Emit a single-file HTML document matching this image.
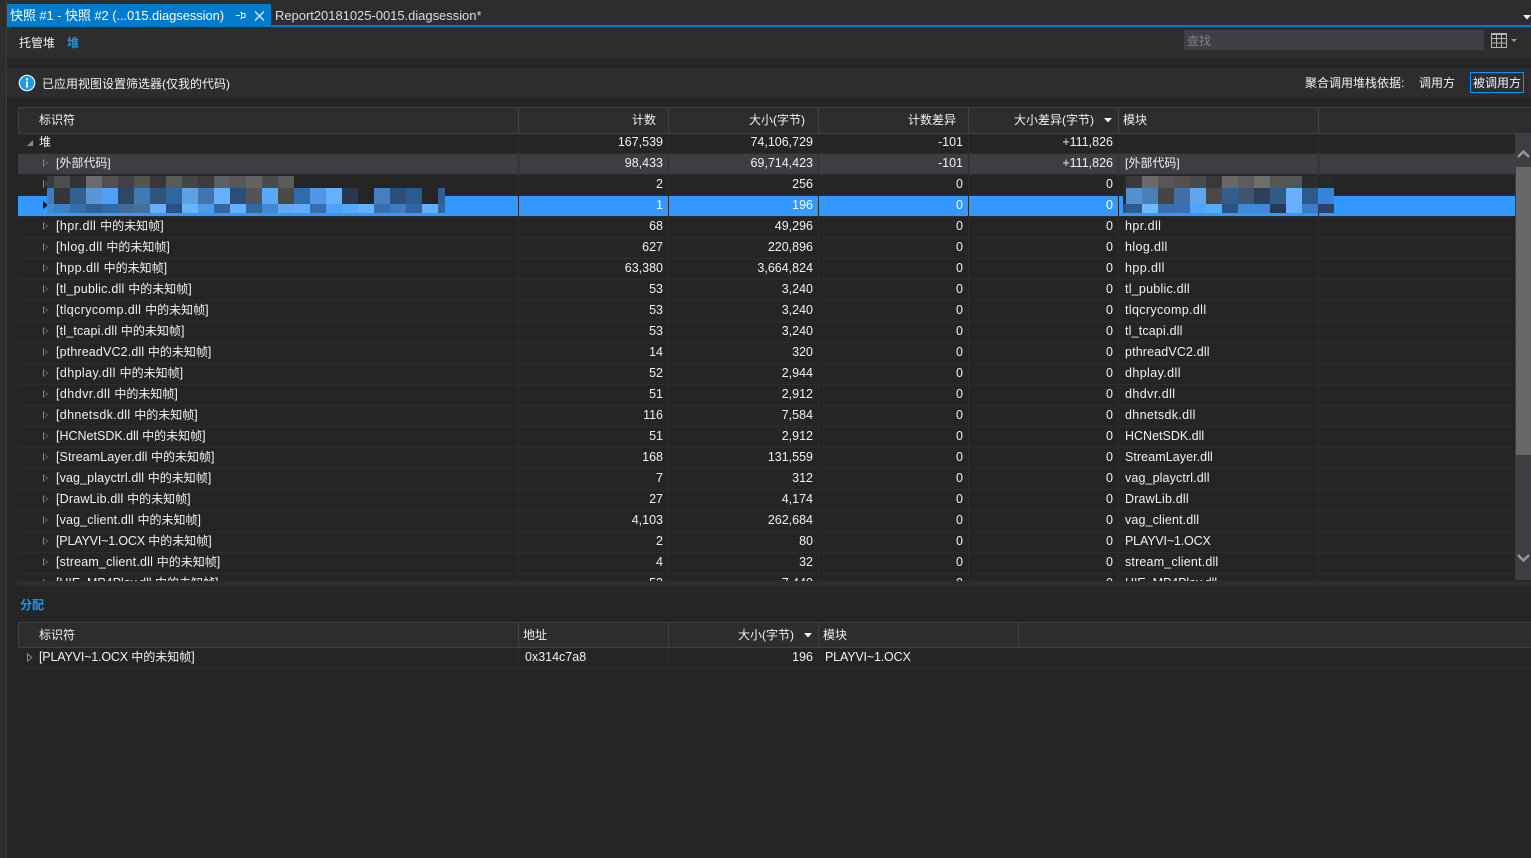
<!DOCTYPE html>
<html><head><meta charset="utf-8"><style>
*{box-sizing:border-box}
html,body{margin:0;padding:0;width:1531px;height:858px;overflow:hidden;background:#252526;color:#f1f1f1;font:12.5px/17px "Liberation Sans","Noto Sans CJK SC",sans-serif}
.a{position:absolute;white-space:nowrap}
u{text-decoration:none;font-size:12px;letter-spacing:0}
.r{position:absolute;left:18px;width:1497px;height:21px;border-bottom:1px solid #2d2d30;display:flex}
.r span{display:block;height:100%;border-right:1px solid #2d2d30;white-space:nowrap;padding-top:1px;overflow:visible;position:relative}
.r span:nth-child(1){width:501px;padding-left:38px}
.r span:nth-child(2){width:150px;text-align:right;padding-right:5px}
.r span:nth-child(3){width:150px;text-align:right;padding-right:5px}
.r span:nth-child(4){width:150px;text-align:right;padding-right:5px}
.r span:nth-child(5){width:150px;text-align:right;padding-right:5px}
.r span:nth-child(6){width:200px;padding-left:6px}
.g{background:#3e3e42;border-bottom-color:#2d2d30}
.s{background:#3399ff;color:#fff;border-bottom-color:#2d2d30}
.s span{border-right-color:#252526}
.t::before,.t::after{content:"";position:absolute;left:25px;top:5px;width:0;height:0;border-style:solid;border-width:4px 0 4px 5px;border-color:transparent transparent transparent #8a8a8a}
.t::after{left:26px;top:6px;border-width:3px 0 3px 3px;border-left-color:#252526}
.g .t::after{border-left-color:#3e3e42}
.s .t::before{border-left-color:#111}.s .t::after{border-left-color:#111}
</style></head><body>

<div class="a" style="left:0;top:0;width:1531px;height:27px;background:#2d2d30"></div>
<div class="a" style="left:271px;top:25px;width:1260px;height:2px;background:#007acc"></div>
<div class="a" style="left:6px;top:4px;width:265px;height:23px;background:#007acc"></div>
<div class="a" style="left:10px;top:7px;color:#fff;font-size:13px;letter-spacing:-.08px">快照 #1 - 快照 #2 (...015.diagsession)</div>
<svg class="a" style="left:234px;top:9px" width="32" height="14" viewBox="0 0 32 14"><path d="M2 6.5H6M6.5 3.5H7.5V9.5H6.5M7.5 4.5H11V8.5H7.5" fill="none" stroke="#fff" stroke-width="1"/><path d="M21 2.5L30 11.5M30 2.5L21 11.5" stroke="#cfe6f6" stroke-width="1.5"/></svg>
<div class="a" style="left:275px;top:7px;color:#dcdcdc;font-size:13px;letter-spacing:-.03px">Report20181025-0015.diagsession*</div>
<svg class="a" style="left:1523px;top:15px" width="8" height="5"><path d="M0 0H8L4 4.5Z" fill="#f1f1f1"/></svg>

<div class="a" style="left:0;top:0;width:7px;height:858px;background:#2d2d30;border-right:1px solid #3a3a3d;"></div>
<div class="a" style="left:0;top:0;width:6px;height:27px;background:#2d2d30"></div>

<div class="a" style="left:7px;top:27px;width:1524px;height:31px;background:#2d2d30"></div>
<div class="a" style="left:19px;top:35px;font-size:12px">托管堆</div>
<div class="a" style="left:67px;top:35px;font-size:12px;color:#1c97ea;font-weight:bold">堆</div>
<div class="a" style="left:1184px;top:30px;width:300px;height:20px;background:#3f3f46"></div>
<div class="a" style="left:1187px;top:33px;font-size:12px;color:#808080">查找</div>
<svg class="a" style="left:1491px;top:33px" width="26" height="15" viewBox="0 0 26 15"><path d="M.5.5H15.5V14.5H.5ZM.5 5.5H15.5M.5 10H15.5M5.5 .5V14.5M10.5 .5V14.5" fill="none" stroke="#b4b4b4"/><path d="M.5 1H15.5" stroke="#b4b4b4" stroke-width="2"/><path d="M20 6H26L23 9Z" fill="#999"/></svg>

<div class="a" style="left:7px;top:68px;width:1524px;height:29px;background:#2d2d30"></div>
<svg class="a" style="left:18px;top:74px" width="18" height="18" viewBox="0 0 18 18"><circle cx="9" cy="9" r="7.7" fill="#1b9ae6" stroke="#eaf5fc" stroke-width="1.2"/><rect x="8" y="7.5" width="2" height="6" fill="#fff"/><rect x="8" y="4.3" width="2" height="2" fill="#fff"/></svg>
<div class="a" style="left:42px;top:76px;font-size:12px">已应用视图设置筛选器(仅我的代码)</div>
<div class="a" style="left:1305px;top:75px;font-size:12px">聚合调用堆栈依据:</div>
<div class="a" style="left:1419px;top:75px;font-size:12px">调用方</div>
<div class="a" style="left:1470px;top:72px;width:54px;height:21px;border:1px solid #0e97f7"></div>
<div class="a" style="left:1473px;top:75px;font-size:12px">被调用方</div>

<!-- table 1 header -->
<div class="a" style="left:18px;top:107px;width:1513px;height:27px;background:#2d2d30;border:1px solid #3f3f46;border-right:0"></div>
<div class="a" style="left:518px;top:108px;width:1px;height:25px;background:#3f3f46"></div>
<div class="a" style="left:668px;top:108px;width:1px;height:25px;background:#3f3f46"></div>
<div class="a" style="left:818px;top:108px;width:1px;height:25px;background:#3f3f46"></div>
<div class="a" style="left:968px;top:108px;width:1px;height:25px;background:#3f3f46"></div>
<div class="a" style="left:1118px;top:108px;width:1px;height:25px;background:#3f3f46"></div>
<div class="a" style="left:1318px;top:108px;width:1px;height:25px;background:#3f3f46"></div>
<div class="a" style="left:39px;top:112px;font-size:12px">标识符</div>
<div class="a" style="right:875px;top:112px;font-size:12px">计数</div>
<div class="a" style="right:726px;top:112px;font-size:12px">大小(字节)</div>
<div class="a" style="right:575px;top:112px;font-size:12px">计数差异</div>
<div class="a" style="right:437px;top:112px;font-size:12px">大小差异(字节)</div>
<svg class="a" style="left:1104px;top:118px" width="8" height="5"><path d="M0 0H8L4 4.5Z" fill="#f1f1f1"/></svg>
<div class="a" style="left:1123px;top:112px;font-size:12px">模块</div>

<!-- table 1 rows -->
<div class="a" style="left:0;top:134px;width:1531px;height:447px;overflow:hidden">
<div class="r" style="top:-1px"><span style="padding-left:21px"><u>堆</u></span><span>167,539</span><span>74,106,729</span><span>-101</span><span>+111,826</span><span></span></div>
<svg class="a" style="left:26px;top:5px" width="8" height="8"><path d="M7 1V7H1Z" fill="#8a8a8a"/></svg>
<div class="r g" style="top:20px"><span class="t"><u>[外部代码]</u></span><span>98,433</span><span>69,714,423</span><span>-101</span><span>+111,826</span><span><u>[外部代码]</u></span></div>
<div class="r" style="top:41px"><span class="t"></span><span>2</span><span>256</span><span>0</span><span>0</span><span></span></div>
<div class="r s" style="top:62px"><span class="t"></span><span>1</span><span>196</span><span>0</span><span>0</span><span></span></div>
<div class="r" style="top:83px"><span class="t" style="letter-spacing:.43px">[hpr.dll <u>中的未知帧</u>]</span><span>68</span><span>49,296</span><span>0</span><span>0</span><span style="letter-spacing:.43px">hpr.dll</span></div>
<div class="r" style="top:104px"><span class="t" style="letter-spacing:.38px">[hlog.dll <u>中的未知帧</u>]</span><span>627</span><span>220,896</span><span>0</span><span>0</span><span style="letter-spacing:.38px">hlog.dll</span></div>
<div class="r" style="top:125px"><span class="t" style="letter-spacing:.43px">[hpp.dll <u>中的未知帧</u>]</span><span>63,380</span><span>3,664,824</span><span>0</span><span>0</span><span style="letter-spacing:.43px">hpp.dll</span></div>
<div class="r" style="top:146px"><span class="t" style="letter-spacing:.23px">[tl_public.dll <u>中的未知帧</u>]</span><span>53</span><span>3,240</span><span>0</span><span>0</span><span style="letter-spacing:.23px">tl_public.dll</span></div>
<div class="r" style="top:167px"><span class="t" style="letter-spacing:.36px">[tlqcrycomp.dll <u>中的未知帧</u>]</span><span>53</span><span>3,240</span><span>0</span><span>0</span><span style="letter-spacing:.36px">tlqcrycomp.dll</span></div>
<div class="r" style="top:188px"><span class="t" style="letter-spacing:.17px">[tl_tcapi.dll <u>中的未知帧</u>]</span><span>53</span><span>3,240</span><span>0</span><span>0</span><span style="letter-spacing:.17px">tl_tcapi.dll</span></div>
<div class="r" style="top:209px"><span class="t" style="letter-spacing:.14px">[pthreadVC2.dll <u>中的未知帧</u>]</span><span>14</span><span>320</span><span>0</span><span>0</span><span style="letter-spacing:.14px">pthreadVC2.dll</span></div>
<div class="r" style="top:230px"><span class="t" style="letter-spacing:.4px">[dhplay.dll <u>中的未知帧</u>]</span><span>52</span><span>2,944</span><span>0</span><span>0</span><span style="letter-spacing:.4px">dhplay.dll</span></div>
<div class="r" style="top:251px"><span class="t" style="letter-spacing:.44px">[dhdvr.dll <u>中的未知帧</u>]</span><span>51</span><span>2,912</span><span>0</span><span>0</span><span style="letter-spacing:.44px">dhdvr.dll</span></div>
<div class="r" style="top:272px"><span class="t" style="letter-spacing:.33px">[dhnetsdk.dll <u>中的未知帧</u>]</span><span>116</span><span>7,584</span><span>0</span><span>0</span><span style="letter-spacing:.33px">dhnetsdk.dll</span></div>
<div class="r" style="top:293px"><span class="t">[HCNetSDK.dll <u>中的未知帧</u>]</span><span>51</span><span>2,912</span><span>0</span><span>0</span><span>HCNetSDK.dll</span></div>
<div class="r" style="top:314px"><span class="t" style="letter-spacing:.07px">[StreamLayer.dll <u>中的未知帧</u>]</span><span>168</span><span>131,559</span><span>0</span><span>0</span><span style="letter-spacing:.07px">StreamLayer.dll</span></div>
<div class="r" style="top:335px"><span class="t" style="letter-spacing:.12px">[vag_playctrl.dll <u>中的未知帧</u>]</span><span>7</span><span>312</span><span>0</span><span>0</span><span style="letter-spacing:.12px">vag_playctrl.dll</span></div>
<div class="r" style="top:356px"><span class="t" style="letter-spacing:.18px">[DrawLib.dll <u>中的未知帧</u>]</span><span>27</span><span>4,174</span><span>0</span><span>0</span><span style="letter-spacing:.18px">DrawLib.dll</span></div>
<div class="r" style="top:377px"><span class="t" style="letter-spacing:.14px">[vag_client.dll <u>中的未知帧</u>]</span><span>4,103</span><span>262,684</span><span>0</span><span>0</span><span style="letter-spacing:.14px">vag_client.dll</span></div>
<div class="r" style="top:398px"><span class="t" style="letter-spacing:-.17px">[PLAYVI~1.OCX <u>中的未知帧</u>]</span><span>2</span><span>80</span><span>0</span><span>0</span><span style="letter-spacing:-.17px">PLAYVI~1.OCX</span></div>
<div class="r" style="top:419px"><span class="t" style="letter-spacing:.18px">[stream_client.dll <u>中的未知帧</u>]</span><span>4</span><span>32</span><span>0</span><span>0</span><span style="letter-spacing:.18px">stream_client.dll</span></div>
<div class="r" style="top:440px"><span class="t" style="letter-spacing:-.05px">[HIE_MP4Play.dll <u>中的未知帧</u>]</span><span>53</span><span>7,440</span><span>0</span><span>0</span><span style="letter-spacing:-.05px">HIE_MP4Play.dll</span></div>
</div>

<!-- scrollbar -->
<div class="a" style="left:1515px;top:134px;width:16px;height:446px;background:#3e3e42"></div>
<div class="a" style="left:1516px;top:167px;width:15px;height:288px;background:#686868"></div>
<svg class="a" style="left:1516px;top:148px" width="15" height="12"><path d="M2 9L7.5 3.5L13 9" fill="none" stroke="#999" stroke-width="2.4"/></svg>
<svg class="a" style="left:1516px;top:552px" width="15" height="12"><path d="M2 3L7.5 8.5L13 3" fill="none" stroke="#999" stroke-width="2.4"/></svg>

<!-- mosaics -->
<svg class="a" style="left:47px;top:176px" width="398" height="37" shape-rendering="crispEdges">
<g transform="translate(7,0)">
<rect x="-7" width="7" height="12" fill="#3a3a3c"/><rect x="0" width="16" height="12" fill="#4d4d4b"/><rect x="16" width="16" height="12" fill="#333336"/><rect x="32" width="16" height="12" fill="#6b6b6b"/><rect x="48" width="16" height="12" fill="#525050"/><rect x="64" width="16" height="12" fill="#434145"/><rect x="80" width="16" height="12" fill="#55554f"/><rect x="96" width="16" height="12" fill="#38383b"/><rect x="112" width="16" height="12" fill="#5a5a5a"/><rect x="128" width="16" height="12" fill="#454546"/><rect x="144" width="16" height="12" fill="#3c3c3c"/><rect x="160" width="16" height="12" fill="#5d5f63"/><rect x="176" width="16" height="12" fill="#575757"/><rect x="192" width="16" height="12" fill="#63635f"/><rect x="208" width="16" height="12" fill="#4a4a48"/><rect x="224" width="16" height="12" fill="#5a5a5a"/>
<g transform="translate(0,12)">
<rect x="-7" width="7" height="16" fill="#3a7cc4"/><rect x="0" width="16" height="16" fill="#353637"/><rect x="16" width="16" height="16" fill="#34608f"/><rect x="32" width="16" height="16" fill="#5b95d4"/><rect x="48" width="16" height="16" fill="#4ea1f8"/><rect x="64" width="16" height="16" fill="#2c4867"/><rect x="80" width="16" height="16" fill="#4279b5"/><rect x="96" width="16" height="16" fill="#325479"/><rect x="112" width="16" height="16" fill="#2e66a0"/><rect x="128" width="16" height="16" fill="#5ea2e6"/><rect x="144" width="16" height="16" fill="#4075ad"/><rect x="160" width="16" height="16" fill="#66b0ff"/><rect x="176" width="16" height="16" fill="#2b4e77"/><rect x="192" width="16" height="16" fill="#535358"/><rect x="208" width="16" height="16" fill="#58a8fb"/><rect x="224" width="16" height="16" fill="#4c4846"/><rect x="240" width="16" height="16" fill="#2f6cac"/><rect x="256" width="16" height="16" fill="#4f97e4"/><rect x="272" width="16" height="16" fill="#64b0ff"/><rect x="288" width="16" height="16" fill="#28384f"/><rect x="304" width="16" height="16" fill="#252525"/><rect x="320" width="16" height="16" fill="#447fc0"/><rect x="336" width="16" height="16" fill="#2b4f78"/><rect x="352" width="16" height="16" fill="#2c5b8f"/><rect x="368" width="16" height="16" fill="#252525"/><rect x="384" width="7" height="16" fill="#2f5f95"/>
</g>
<g transform="translate(0,28)">
<rect x="-7" width="7" height="9" fill="#3f8ad8"/><rect x="0" width="16" height="9" fill="#3c80c8"/><rect x="16" width="16" height="9" fill="#3270ad"/><rect x="32" width="16" height="9" fill="#305f92"/><rect x="48" width="16" height="9" fill="#2f69a6"/><rect x="64" width="16" height="9" fill="#436a93"/><rect x="80" width="16" height="9" fill="#486f98"/><rect x="96" width="16" height="9" fill="#66b0ff"/><rect x="112" width="16" height="9" fill="#2a5180"/><rect x="128" width="16" height="9" fill="#66b5ff"/><rect x="144" width="16" height="9" fill="#4f9ae9"/><rect x="160" width="16" height="9" fill="#2f68a3"/><rect x="176" width="16" height="9" fill="#66b0ff"/><rect x="192" width="16" height="9" fill="#2f6aa5"/><rect x="208" width="16" height="9" fill="#4287d0"/><rect x="224" width="16" height="9" fill="#5fa8f8"/><rect x="240" width="16" height="9" fill="#62aefc"/><rect x="256" width="16" height="9" fill="#3270b2"/><rect x="272" width="16" height="9" fill="#4ea2fb"/><rect x="288" width="16" height="9" fill="#55a9ff"/><rect x="304" width="16" height="9" fill="#66b0ff"/><rect x="320" width="16" height="9" fill="#3270b2"/><rect x="336" width="16" height="9" fill="#3b7cc2"/><rect x="352" width="16" height="9" fill="#2f659f"/><rect x="368" width="16" height="9" fill="#66aef8"/><rect x="384" width="7" height="9" fill="#2f68a3"/>
</g></g></svg>

<svg class="a" style="left:1123px;top:176px" width="212" height="37" shape-rendering="crispEdges">
<g transform="translate(3,0)">
<rect x="-3" width="3" height="12" fill="#2a2a2b"/><rect x="0" width="16" height="12" fill="#3a3a3d"/><rect x="16" width="16" height="12" fill="#6a6a68"/><rect x="32" width="16" height="12" fill="#5a5656"/><rect x="48" width="16" height="12" fill="#54504e"/><rect x="64" width="16" height="12" fill="#4a4a4a"/><rect x="80" width="16" height="12" fill="#39383b"/><rect x="96" width="16" height="12" fill="#686866"/><rect x="112" width="16" height="12" fill="#5c5c5c"/><rect x="128" width="16" height="12" fill="#70706a"/><rect x="144" width="16" height="12" fill="#57554f"/><rect x="160" width="16" height="12" fill="#535659"/><rect x="176" width="16" height="12" fill="#2c2c2e"/><rect x="192" width="16" height="12" fill="#282828"/>
<g transform="translate(0,12)">
<rect x="-3" width="3" height="16" fill="#2a2a2b"/><rect x="0" width="16" height="16" fill="#5490cb"/><rect x="16" width="16" height="16" fill="#4a7fb8"/><rect x="32" width="16" height="16" fill="#454545"/><rect x="48" width="16" height="16" fill="#3f6fa3"/><rect x="64" width="16" height="16" fill="#60a6ec"/><rect x="80" width="16" height="16" fill="#4a4846"/><rect x="96" width="16" height="16" fill="#335d8b"/><rect x="112" width="16" height="16" fill="#3f556f"/><rect x="128" width="16" height="16" fill="#2d405a"/><rect x="144" width="16" height="16" fill="#305a89"/><rect x="160" width="16" height="16" fill="#66b0ff"/><rect x="176" width="16" height="16" fill="#2d5a8c"/><rect x="192" width="16" height="16" fill="#3585dc"/>
</g>
<g transform="translate(0,28)">
<rect x="-3" width="3" height="9" fill="#2a5080"/><rect x="0" width="16" height="9" fill="#2d5c91"/><rect x="16" width="16" height="9" fill="#72b8ff"/><rect x="32" width="16" height="9" fill="#3a70a9"/><rect x="48" width="16" height="9" fill="#3572b2"/><rect x="64" width="16" height="9" fill="#4fa5ff"/><rect x="80" width="16" height="9" fill="#55abff"/><rect x="96" width="16" height="9" fill="#2b5282"/><rect x="112" width="16" height="9" fill="#4088d8"/><rect x="128" width="16" height="9" fill="#4089d8"/><rect x="144" width="16" height="9" fill="#253a58"/><rect x="160" width="16" height="9" fill="#66b0ff"/><rect x="176" width="16" height="9" fill="#3a7dc8"/><rect x="192" width="16" height="9" fill="#29436a"/>
</g></g></svg>

<!-- divider band -->
<div class="a" style="left:17px;top:581px;width:1514px;height:5px;background:#2d2d30"></div>
<div class="a" style="left:20px;top:597px;font-size:12px;color:#1c97ea;font-weight:bold">分配</div>

<!-- table 2 -->
<div class="a" style="left:18px;top:622px;width:1513px;height:26px;background:#2d2d30;border:1px solid #3f3f46;border-right:0"></div>
<div class="a" style="left:518px;top:623px;width:1px;height:24px;background:#3f3f46"></div>
<div class="a" style="left:668px;top:623px;width:1px;height:24px;background:#3f3f46"></div>
<div class="a" style="left:818px;top:623px;width:1px;height:24px;background:#3f3f46"></div>
<div class="a" style="left:1018px;top:623px;width:1px;height:24px;background:#3f3f46"></div>
<div class="a" style="left:39px;top:627px;font-size:12px">标识符</div>
<div class="a" style="left:523px;top:627px;font-size:12px">地址</div>
<div class="a" style="right:737px;top:627px;font-size:12px">大小(字节)</div>
<svg class="a" style="left:804px;top:633px" width="8" height="5"><path d="M0 0H8L4 4.5Z" fill="#f1f1f1"/></svg>
<div class="a" style="left:823px;top:627px;font-size:12px">模块</div>

<div class="a" style="left:18px;top:648px;width:1513px;height:21px;border-bottom:1px solid #2d2d30;border-left:1px solid #2d2d30"></div>
<div class="a" style="left:518px;top:648px;width:1px;height:20px;background:#2d2d30"></div>
<div class="a" style="left:668px;top:648px;width:1px;height:20px;background:#2d2d30"></div>
<div class="a" style="left:818px;top:648px;width:1px;height:20px;background:#2d2d30"></div>
<div class="a" style="left:1018px;top:648px;width:1px;height:20px;background:#2d2d30"></div>
<svg class="a" style="left:27px;top:653px" width="6" height="9"><path d="M.5.8L4.8 4.5L.5 8.2Z" fill="none" stroke="#8a8a8a"/></svg>
<div class="a" style="left:39px;top:649px;letter-spacing:-.17px">[PLAYVI~1.OCX <u>中的未知帧</u>]</div>
<div class="a" style="left:525px;top:649px">0x314c7a8</div>
<div class="a" style="right:718px;top:649px">196</div>
<div class="a" style="left:825px;top:649px;letter-spacing:-.17px">PLAYVI~1.OCX</div>
</body></html>
